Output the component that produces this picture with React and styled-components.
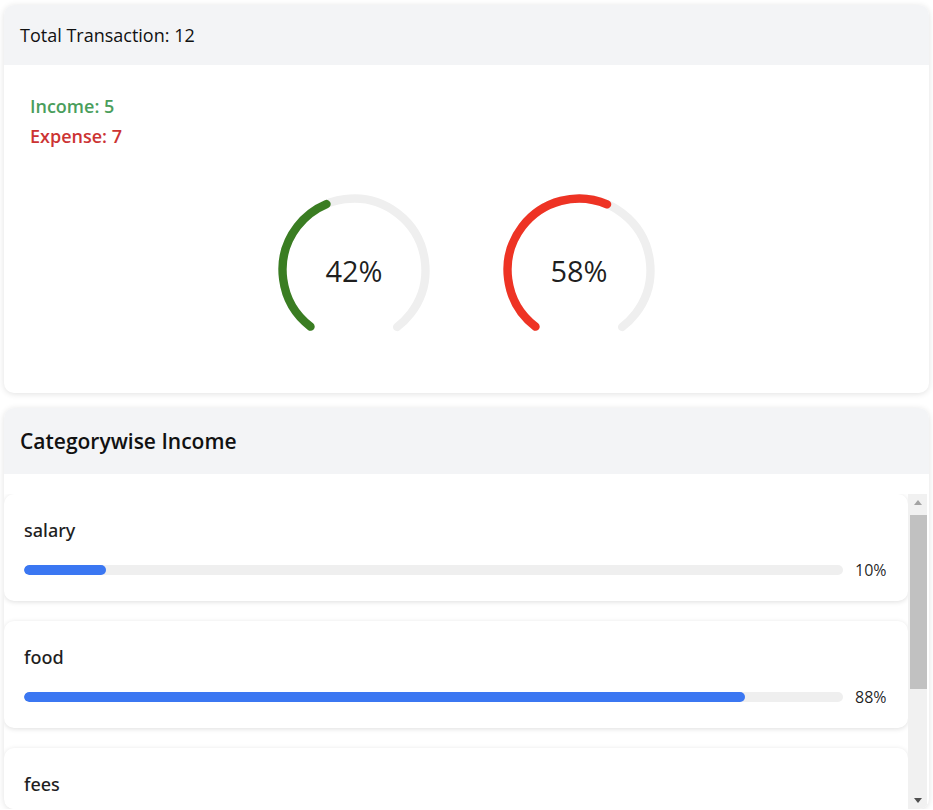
import styled, { createGlobalStyle } from "styled-components";

const GlobalStyle = createGlobalStyle`
  body {
    margin: 0;
    background: #ffffff;
    font-family: "Open Sans", "Noto Sans", sans-serif;
    color: rgba(0, 0, 0, 0.88);
  }
`;

const Page = styled.div`
  padding: 5px 4px 0;
  display: flex;
  flex-direction: column;
  gap: 15px;
`;

const Card = styled.div`
  background: #fff;
  border-radius: 10px;
  box-shadow: 0 1px 6px rgba(0, 0, 0, 0.12);
  overflow: hidden;
`;

const CardHeader = styled.div`
  background: #f3f4f6;
  height: ${(p) => p.$height}px;
  display: flex;
  align-items: center;
  padding: 0 16px;
  font-size: ${(p) => (p.$bold ? 21 : 18)}px;
  font-weight: ${(p) => (p.$bold ? 600 : 400)};
  color: #111;
`;

const SummaryBody = styled.div`
  padding: 26px 26px 47px;
`;

const Count = styled.div`
  font-size: 18px;
  font-weight: 600;
  line-height: 30px;
  color: ${(p) => p.$color};
`;

const Gauges = styled.div`
  display: flex;
  justify-content: center;
  gap: 73px;
  margin-top: 43px;
`;

const GaugeBox = styled.div`
  position: relative;
  width: 152px;
  height: 152px;
`;

const GaugeText = styled.span`
  position: absolute;
  inset: 0;
  display: flex;
  align-items: center;
  justify-content: center;
  font-size: 29px;
  color: rgba(0, 0, 0, 0.88);
`;

const ListBody = styled.div`
  padding: 20px 2px 0 0;
  display: flex;
  height: 315px;
`;

const Scroller = styled.div`
  flex: 1;
  overflow: hidden;
  display: flex;
  flex-direction: column;
  gap: 20px;
`;

const Rail = styled.div`
  flex: none;
  width: 19px;
  background: #f1f1f1;
  display: flex;
  flex-direction: column;
  align-items: stretch;
`;

const RailButton = styled.div`
  flex: none;
  height: 17px;
  display: flex;
  align-items: center;
  justify-content: center;

  &::after {
    content: "";
    border-left: 4.5px solid transparent;
    border-right: 4.5px solid transparent;
    ${(p) =>
      p.$down
        ? "border-top: 5px solid #505050;"
        : "border-bottom: 5px solid #a3a3a3;"}
  }
`;

const Thumb = styled.div`
  flex: none;
  height: 174px;
  margin: 4px 0 0 2px;
  background: #c1c1c1;
`;

const RailGap = styled.div`
  flex: 1;
`;

const Item = styled.div`
  flex: none;
  background: #fff;
  border-radius: 10px;
  box-shadow: 0 1px 5px rgba(0, 0, 0, 0.13);
  padding: 24px 20px 16px;
`;

const ItemName = styled.div`
  font-family: "Noto Sans", "Open Sans", sans-serif;
  font-size: 18px;
  font-weight: 500;
  line-height: 24px;
  color: #1f1f1f;
  margin-bottom: 13px;
`;

const BarRow = styled.div`
  display: flex;
  align-items: center;
  height: 30px;
`;

const Track = styled.div`
  flex: 1;
  height: 10px;
  border-radius: 5px;
  background: #efefef;
  overflow: hidden;
`;

const Fill = styled.div`
  height: 100%;
  border-radius: 5px;
  background: #3b77f2;
`;

const BarText = styled.span`
  flex: none;
  min-width: 33px;
  margin-left: 12px;
  font-size: 16px;
  color: rgba(0, 0, 0, 0.88);
`;

const Gauge = ({ percent, color }) => {
  const r = 47;
  const c = 2 * Math.PI * r;
  const arc = (285 / 360) * c;
  return (
    <GaugeBox>
      <svg width="152" height="152" viewBox="0 0 100 100">
        <g transform="rotate(127.5 50 50)">
          <circle
            cx="50"
            cy="50"
            r={r}
            fill="none"
            stroke="#efefef"
            strokeWidth="5.5"
            strokeLinecap="round"
            strokeDasharray={`${arc} ${c}`}
          />
          <circle
            cx="50"
            cy="50"
            r={r}
            fill="none"
            stroke={color}
            strokeWidth="5.5"
            strokeLinecap="round"
            strokeDasharray={`${(arc * percent) / 100} ${c}`}
          />
        </g>
      </svg>
      <GaugeText>{percent}%</GaugeText>
    </GaugeBox>
  );
};

const categories = [
  { name: "salary", percent: 10 },
  { name: "food", percent: 88 },
  { name: "fees", percent: 2 },
];

export default function App() {
  return (
    <>
      <GlobalStyle />
      <Page>
        <Card>
          <CardHeader $height={60}>Total Transaction: 12</CardHeader>
          <SummaryBody>
            <Count $color="#4a9e5c">Income: 5</Count>
            <Count $color="#cc3333">Expense: 7</Count>
            <Gauges>
              <Gauge percent={42} color="#3a7d22" />
              <Gauge percent={58} color="#ee3324" />
            </Gauges>
          </SummaryBody>
        </Card>
        <Card>
          <CardHeader $height={66} $bold>
            Categorywise Income
          </CardHeader>
          <ListBody>
            <Scroller>
              {categories.map((c) => (
                <Item key={c.name}>
                  <ItemName>{c.name}</ItemName>
                  <BarRow>
                    <Track>
                      <Fill style={{ width: `${c.percent}%` }} />
                    </Track>
                    <BarText>{c.percent}%</BarText>
                  </BarRow>
                </Item>
              ))}
            </Scroller>
            <Rail>
              <RailButton />
              <Thumb />
              <RailGap />
              <RailButton $down />
            </Rail>
          </ListBody>
        </Card>
      </Page>
    </>
  );
}
